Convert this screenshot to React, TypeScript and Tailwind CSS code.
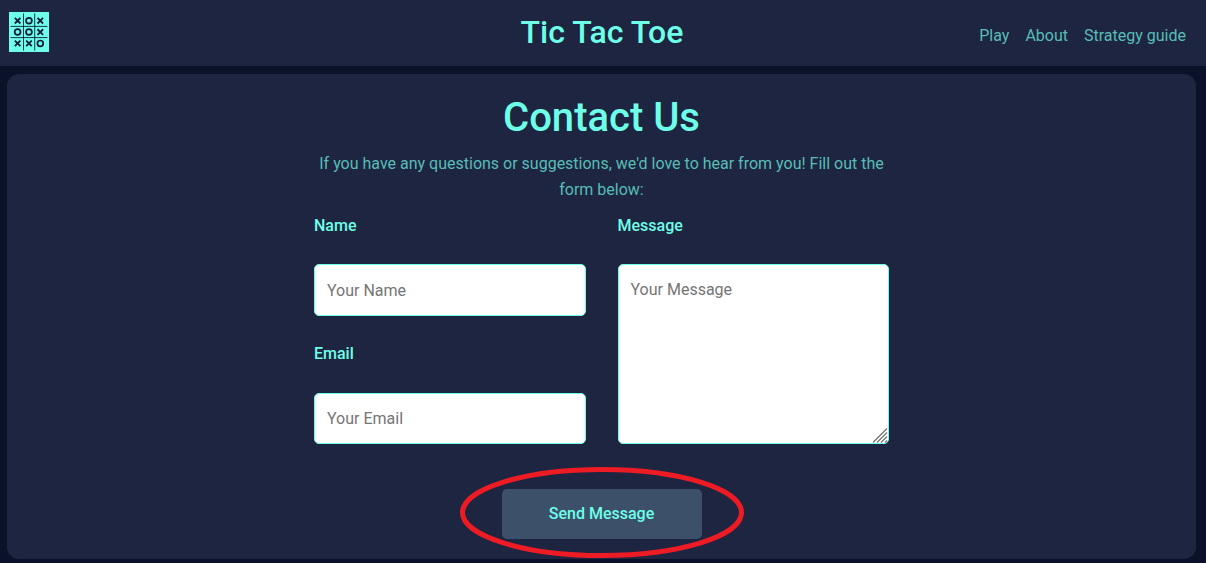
const links = ["Play", "About", "Strategy guide"];

const board = [
  ["x", "o", "x"],
  ["o", "o", "x"],
  ["x", "x", "o"],
];

function Logo() {
  return (
    <svg viewBox="0 0 40 40" className="size-10 shrink-0 bg-[#6effe8]" fill="none" stroke="#111b3a">
      <path strokeWidth="0.9" d="M14.5 1.5V38.5M25.7 1.5V38.5M1.5 14.4H38.5M1.5 25.6H38.5" />
      {board.map((row, r) =>
        row.map((mark, c) => {
          const x = 8.6 + c * 11.35;
          const y = 8.7 + r * 11.35;
          return mark === "o" ? (
            <circle key={`${r}${c}`} cx={x} cy={y} r="2.9" strokeWidth="1.7" />
          ) : (
            <path
              key={`${r}${c}`}
              strokeWidth="1.8"
              d={`M${x - 2.8} ${y - 2.8}l5.6 5.6m0 -5.6l-5.6 5.6`}
            />
          );
        }),
      )}
    </svg>
  );
}

const label = "block h-6 text-base leading-6 font-medium text-[#6effe8]";
const field =
  "block w-full rounded-[5px] border border-[#6effe8] bg-white px-3 text-base text-[#212529] placeholder:text-[#757575] outline-none";

export default function App() {
  return (
    <div className="h-[563px] overflow-hidden bg-[#0a1128] font-['Roboto',sans-serif]">
      <header className="grid h-[66px] grid-cols-[1fr_auto_1fr] bg-[#1d2541] pr-5 pl-[9px]">
        <div className="pt-3">
          <Logo />
        </div>
        <div className="pl-[9px] pt-3 text-[32px] leading-10 font-medium text-[#6effe8]">
          Tic Tac Toe
        </div>
        <nav className="flex justify-end gap-4 pt-6 text-base leading-6 text-[#58bdb5]">
          {links.map((l) => (
            <a key={l} href="#">
              {l}
            </a>
          ))}
        </nav>
      </header>
      <main className="mt-2 mr-[10px] ml-[7px] h-[485px] rounded-xl bg-[#1d2541]">
        <div className="mx-auto flex w-[575px] flex-col items-center pt-5">
          <h1 className="text-[40px] leading-[48px] font-medium text-[#6effe8]">Contact Us</h1>
          <p className="mt-[9px] text-center text-base leading-[26px] text-[#58bdb5]">
            If you have any questions or suggestions, we'd love to hear from you! Fill out the form
            below:
          </p>
          <form className="mt-[11px] flex w-full flex-col items-center">
            <div className="grid w-full grid-cols-2 gap-8">
              <div>
                <label htmlFor="name" className={label}>
                  Name
                </label>
                <input id="name" placeholder="Your Name" className={`${field} mt-[26px] h-[52px]`} />
                <label htmlFor="email" className={`${label} mt-[26px]`}>
                  Email
                </label>
                <input id="email" placeholder="Your Email" className={`${field} mt-[27px] h-[51px]`} />
              </div>
              <div>
                <label htmlFor="message" className={label}>
                  Message
                </label>
                <div className="relative mt-[26px]">
                  <textarea
                    id="message"
                    placeholder="Your Message"
                    className={`${field} h-[180px] resize-none pt-3 leading-[26px]`}
                  />
                  <svg
                    className="absolute right-[1px] bottom-[1px] size-[15px]"
                    viewBox="0 0 15 15"
                    stroke="#777"
                    strokeWidth="1.3"
                  >
                    <path d="M0 14.5L14 .5M4 14.5L14 4.5M8 14.5L14 8.5M12 14.5L14 12.5" />
                  </svg>
                </div>
              </div>
            </div>
            <div className="relative mt-[45px]">
              <button
                type="button"
                className="block h-[50px] w-[200px] rounded-[5px] bg-[#3c506a] text-base font-medium text-[#6effe8]"
              >
                Send Message
              </button>
              <svg
                className="pointer-events-none absolute -top-6 -left-[42px] h-24 w-[284px]"
                viewBox="0 0 284 96"
                fill="none"
              >
                <ellipse cx="142" cy="47.5" rx="139.5" ry="43" stroke="#ed1c24" strokeWidth="5" />
              </svg>
            </div>
          </form>
        </div>
      </main>
    </div>
  );
}
